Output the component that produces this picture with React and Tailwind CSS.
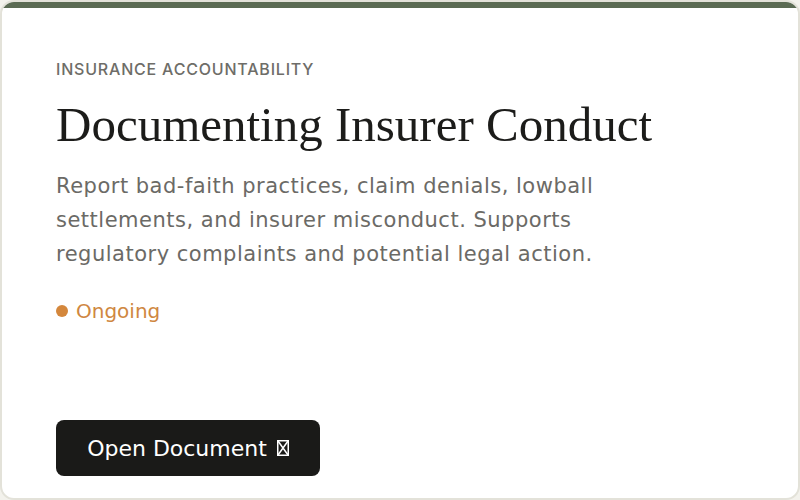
import React from "react";

const App = () => {
  return (
    <div className="h-[500px] w-[800px] bg-[#f3f2ec]">
      <div className="flex h-[500px] flex-col overflow-hidden rounded-[14px] border-2 border-[#e3e2d9] bg-white">
        <div className="h-[6px] bg-[#5b6b53]" />
        <div className="flex flex-1 flex-col px-[54px] pt-[50px]">
          <p className="font-['Inter',sans-serif] text-[16px] font-medium uppercase leading-[22px] tracking-[0.05em] text-[#6e6d68]">
            Insurance Accountability
          </p>
          <h1 className="mt-[16px] font-['Liberation_Serif',serif] text-[49px] leading-[58px] text-[#1c1c1a]">
            Documenting Insurer Conduct
          </h1>
          <p className="mt-[15px] w-[600px] font-['DejaVu_Sans',sans-serif] text-[21px] leading-[34px] tracking-[0.5px] text-[#6b6a66]">
            Report bad-faith practices, claim denials, lowball
            <br />
            settlements, and insurer misconduct. Supports
            <br />
            regulatory complaints and potential legal action.
          </p>
          <div className="mt-[28px] flex items-center gap-[8px]">
            <span className="h-[12px] w-[12px] rounded-full bg-[#d4873c]" />
            <span className="font-['DejaVu_Sans',sans-serif] text-[20px] leading-[24px] text-[#cf8741]">
              Ongoing
            </span>
          </div>
          <div className="mt-[97px]">
            <button className="flex h-[56px] w-[264px] items-center justify-center gap-[10px] rounded-[8px] bg-[#1a1a18] font-['DejaVu_Sans',sans-serif] text-[22px] text-white">
              <span>Open Document</span>
              <svg width="12" height="16" viewBox="0 0 12 16" fill="none" stroke="white" strokeWidth="1.5">
                <rect x="0.75" y="0.75" width="10.5" height="14.5" />
                <path d="M1 1 L11 15 M11 1 L1 15" />
              </svg>
            </button>
          </div>
        </div>
      </div>
    </div>
  );
};

export default App;
